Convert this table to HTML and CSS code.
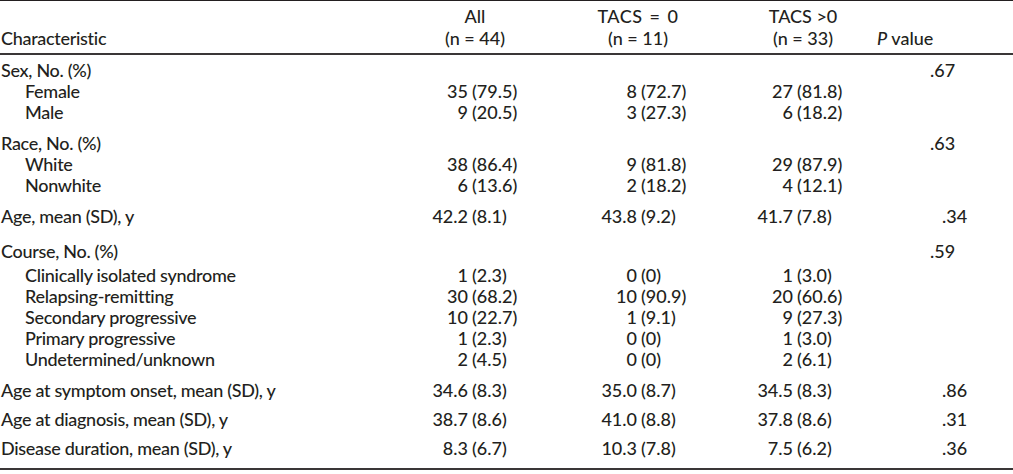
FILE: index.html
```html
<!DOCTYPE html>
<html lang="en">
<head>
<meta charset="utf-8">
<title>Characteristics by TACS</title>
<link rel="stylesheet" href="styles.css">
</head>
<body>
<div class="table">
  <div class="row head">
    <div class="label">Characteristic</div>
    <div class="hcell h-all"><span>All</span><span>(n = 44)</span></div>
    <div class="hcell h-t0"><span>TACS = 0</span><span>(n = 11)</span></div>
    <div class="hcell h-t1"><span>TACS &gt;0</span><span>(n = 33)</span></div>
    <div class="hp"><i>P</i> value</div>
  </div>
  <div class="body">
    <div class="row"><div class="label">Sex, No. (%)</div><div></div><div></div><div></div><div class="pv pv-g">.67</div></div>
    <div class="row"><div class="label sub">Female</div>
      <div class="v va"><span class="n">35</span><span class="p">(79.5)</span></div>
      <div class="v vb"><span class="n">8</span><span class="p">(72.7)</span></div>
      <div class="v vc"><span class="n">27</span><span class="p">(81.8)</span></div><div></div></div>
    <div class="row"><div class="label sub">Male</div>
      <div class="v va"><span class="n">9</span><span class="p">(20.5)</span></div>
      <div class="v vb"><span class="n">3</span><span class="p">(27.3)</span></div>
      <div class="v vc"><span class="n">6</span><span class="p">(18.2)</span></div><div></div></div>

    <div class="row g-race"><div class="label">Race, No. (%)</div><div></div><div></div><div></div><div class="pv pv-g">.63</div></div>
    <div class="row"><div class="label sub">White</div>
      <div class="v va"><span class="n">38</span><span class="p">(86.4)</span></div>
      <div class="v vb"><span class="n">9</span><span class="p">(81.8)</span></div>
      <div class="v vc"><span class="n">29</span><span class="p">(87.9)</span></div><div></div></div>
    <div class="row"><div class="label sub">Nonwhite</div>
      <div class="v va"><span class="n">6</span><span class="p">(13.6)</span></div>
      <div class="v vb"><span class="n">2</span><span class="p">(18.2)</span></div>
      <div class="v vc"><span class="n">4</span><span class="p">(12.1)</span></div><div></div></div>

    <div class="row g-age"><div class="label">Age, mean (SD), y</div>
      <div class="v va"><span class="n">42.2</span><span class="p">(8.1)</span></div>
      <div class="v vb"><span class="n">43.8</span><span class="p">(9.2)</span></div>
      <div class="v vc"><span class="n">41.7</span><span class="p">(7.8)</span></div>
      <div class="pv pv-s">.34</div></div>

    <div class="row g-course"><div class="label">Course, No. (%)</div><div></div><div></div><div></div><div class="pv pv-g">.59</div></div>
    <div class="row g-course-first"><div class="label sub">Clinically isolated syndrome</div>
      <div class="v va"><span class="n">1</span><span class="p">(2.3)</span></div>
      <div class="v vb"><span class="n">0</span><span class="p">(0)</span></div>
      <div class="v vc"><span class="n">1</span><span class="p">(3.0)</span></div><div></div></div>
    <div class="row"><div class="label sub">Relapsing-remitting</div>
      <div class="v va"><span class="n">30</span><span class="p">(68.2)</span></div>
      <div class="v vb"><span class="n">10</span><span class="p">(90.9)</span></div>
      <div class="v vc"><span class="n">20</span><span class="p">(60.6)</span></div><div></div></div>
    <div class="row"><div class="label sub">Secondary progressive</div>
      <div class="v va"><span class="n">10</span><span class="p">(22.7)</span></div>
      <div class="v vb"><span class="n">1</span><span class="p">(9.1)</span></div>
      <div class="v vc"><span class="n">9</span><span class="p">(27.3)</span></div><div></div></div>
    <div class="row"><div class="label sub">Primary progressive</div>
      <div class="v va"><span class="n">1</span><span class="p">(2.3)</span></div>
      <div class="v vb"><span class="n">0</span><span class="p">(0)</span></div>
      <div class="v vc"><span class="n">1</span><span class="p">(3.0)</span></div><div></div></div>
    <div class="row"><div class="label sub">Undetermined/unknown</div>
      <div class="v va"><span class="n">2</span><span class="p">(4.5)</span></div>
      <div class="v vb"><span class="n">0</span><span class="p">(0)</span></div>
      <div class="v vc"><span class="n">2</span><span class="p">(6.1)</span></div><div></div></div>

    <div class="row g-onset"><div class="label">Age at symptom onset, mean (SD), y</div>
      <div class="v va"><span class="n">34.6</span><span class="p">(8.3)</span></div>
      <div class="v vb"><span class="n">35.0</span><span class="p">(8.7)</span></div>
      <div class="v vc"><span class="n">34.5</span><span class="p">(8.3)</span></div>
      <div class="pv pv-s">.86</div></div>
    <div class="row g-diag"><div class="label">Age at diagnosis, mean (SD), y</div>
      <div class="v va"><span class="n">38.7</span><span class="p">(8.6)</span></div>
      <div class="v vb"><span class="n">41.0</span><span class="p">(8.8)</span></div>
      <div class="v vc"><span class="n">37.8</span><span class="p">(8.6)</span></div>
      <div class="pv pv-s">.31</div></div>
    <div class="row g-dur"><div class="label">Disease duration, mean (SD), y</div>
      <div class="v va"><span class="n">8.3</span><span class="p">(6.7)</span></div>
      <div class="v vb"><span class="n">10.3</span><span class="p">(7.8)</span></div>
      <div class="v vc"><span class="n">7.5</span><span class="p">(6.2)</span></div>
      <div class="pv pv-s">.36</div></div>
  </div>
</div>
</body>
</html>
```

FILE: styles.css
```css
html, body {
  margin: 0;
  padding: 0;
  background: #ffffff;
}

body {
  font-family: Lato, "Open Sans", sans-serif;
  font-size: 18px;
  font-weight: 500;
  color: #231f20;
  width: 1013px;
}

.table {
  width: 1013px;
  border-top: 1px solid #231f20;
  border-bottom: 2px solid #3a3637;
}

.row {
  display: grid;
  grid-template-columns: 400px 160px 160px 140px 1fr;
  line-height: 20.8px;
  white-space: nowrap;
}

.head {
  line-height: 22px;
  padding: 4px 0 4px;
  border-bottom: 2px solid #3a3637;
  align-items: end;
}

.hcell {
  display: flex;
  flex-direction: column;
  align-items: center;
  width: 100px;
}

.h-all { margin-left: 25px; }
.h-t0 { margin-left: 28px; }
.h-t1 { margin-left: 33px; }

.h-t0 span:first-child {
  word-spacing: 2px;
  letter-spacing: 0.5px;
}

.hp {
  padding-left: 17px;
}

.body {
  padding: 5px 0 9px;
}

.label {
  padding-left: 1px;
  letter-spacing: -0.3px;
}

.label.sub {
  padding-left: 25px;
}

.v {
  display: flex;
}

.v .n {
  text-align: right;
}

.v .p {
  padding-left: 4px;
}

.va .n { width: 68px; }
.vb .n { width: 77px; }
.vc .n { width: 73px; }

.pv-g { padding-left: 70px; }
.pv-s { padding-left: 82px; }

.g-race { margin-top: 11px; }
.g-age { margin-top: 10px; }
.g-course { margin-top: 14px; }
.g-course-first { margin-top: 4px; }
.g-onset { margin-top: 11px; }
.g-diag { margin-top: 8px; }
.g-dur { margin-top: 8px; }
```
